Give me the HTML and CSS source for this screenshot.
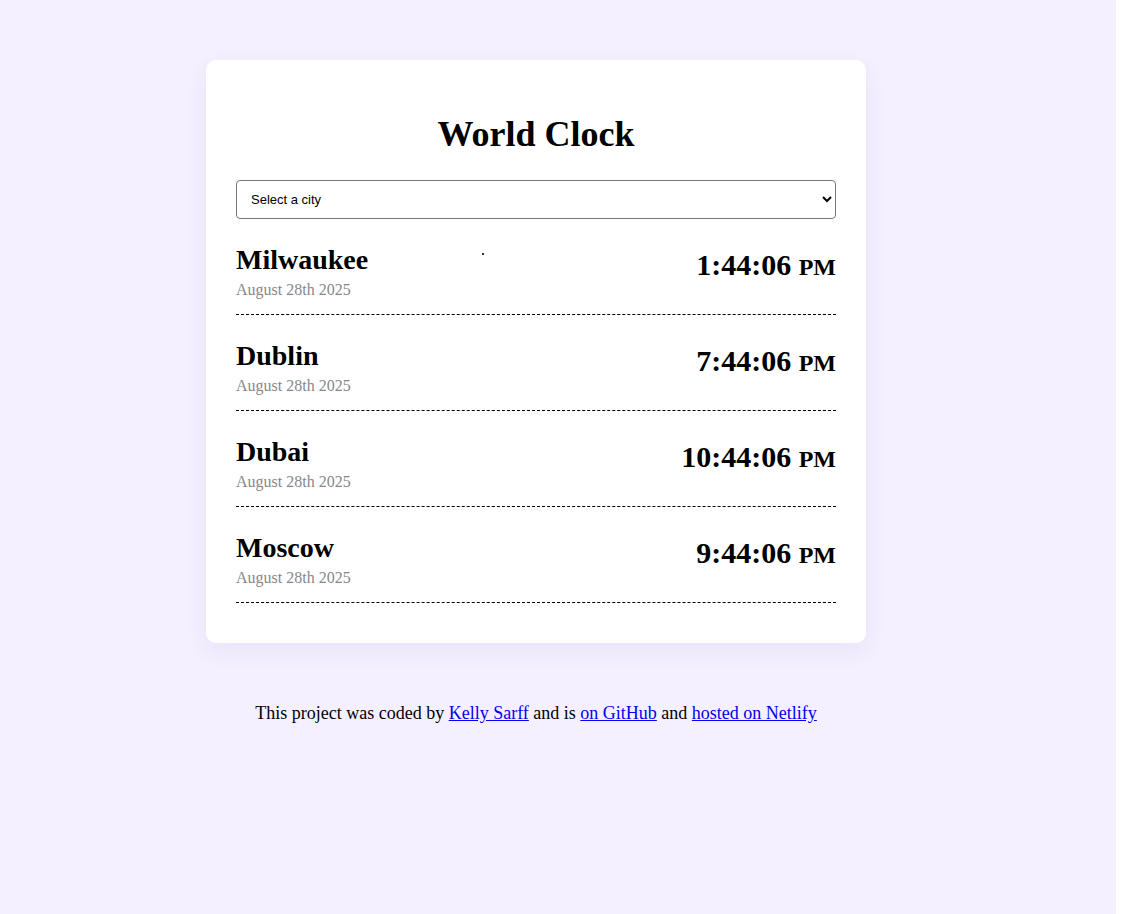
FILE: index.html
```html
<!DOCTYPE html>
<html lang="en">
<head>
<meta charset="utf-8">
<title>World Clock</title>
<link rel="stylesheet" href="styles.css">
</head>
<body>
<div class="page">
  <div class="inner">
    <div class="card">
      <h1 class="title">World Clock</h1>
      <select class="city-select">
        <option>Select a city</option>
      </select>
      <div class="cities">
        <div class="city">
          <div class="city-info">
            <h2 class="city-name">Milwaukee</h2>
            <div class="city-date">August 28th 2025</div>
          </div>
          <span class="stray-dot"></span>
          <div class="city-time">1:44:06 <small class="ampm">PM</small></div>
        </div>
        <div class="city">
          <div class="city-info">
            <h2 class="city-name">Dublin</h2>
            <div class="city-date">August 28th 2025</div>
          </div>
          <div class="city-time">7:44:06 <small class="ampm">PM</small></div>
        </div>
        <div class="city">
          <div class="city-info">
            <h2 class="city-name">Dubai</h2>
            <div class="city-date">August 28th 2025</div>
          </div>
          <div class="city-time">10:44:06 <small class="ampm">PM</small></div>
        </div>
        <div class="city">
          <div class="city-info">
            <h2 class="city-name">Moscow</h2>
            <div class="city-date">August 28th 2025</div>
          </div>
          <div class="city-time">9:44:06 <small class="ampm">PM</small></div>
        </div>
      </div>
    </div>
    <footer class="footer">
      This project was coded by <a href="#">Kelly Sarff</a> and is <a href="#">on GitHub</a> and <a href="#">hosted on Netlify</a>
    </footer>
  </div>
</div>
</body>
</html>
```

FILE: styles.css
```css
html {
  background: #ffffff;
}

body {
  margin: 0;
  font-family: "Liberation Serif", "Times New Roman", serif;
  font-size: 16px;
  color: #000;
}

.page {
  width: 1116px;
  min-height: 914px;
  background: #f4f0ff;
  padding-top: 60px;
  box-sizing: border-box;
}

.inner {
  width: 1072px;
}

.card {
  width: 660px;
  margin: 0 auto;
  background: #ffffff;
  border-radius: 10px;
  padding: 30px 30px 40px;
  box-sizing: border-box;
  box-shadow: 0 8px 22px rgba(70, 50, 160, 0.07);
}

.title {
  font-size: 36px;
  font-weight: bold;
  text-align: center;
  margin: 23px 0 25px;
}

.city-select {
  display: block;
  width: 100%;
  height: 39px;
  font-family: "Liberation Sans", Arial, sans-serif;
  font-size: 13px;
  color: #000;
  background: #fff;
  border: 1px solid #767676;
  border-radius: 4px;
  padding: 0 10px;
  margin: 0;
}

.city {
  position: relative;
  display: flex;
  justify-content: space-between;
  align-items: flex-start;
  padding: 25px 0 15px;
  border-bottom: 1px dashed #000;
}

.city-name {
  font-size: 28px;
  font-weight: bold;
  margin: 0 0 5px;
}

.city-date {
  font-size: 16px;
  color: #888888;
}

.city-time {
  font-size: 30px;
  font-weight: bold;
  padding-top: 4px;
}

.ampm {
  font-size: 24px;
}

.stray-dot {
  position: absolute;
  left: 246px;
  top: 34px;
  width: 2px;
  height: 2px;
  background: #333;
}

.footer {
  margin-top: 60px;
  text-align: center;
  font-size: 18px;
}

.footer a {
  color: #0000ee;
}
```
